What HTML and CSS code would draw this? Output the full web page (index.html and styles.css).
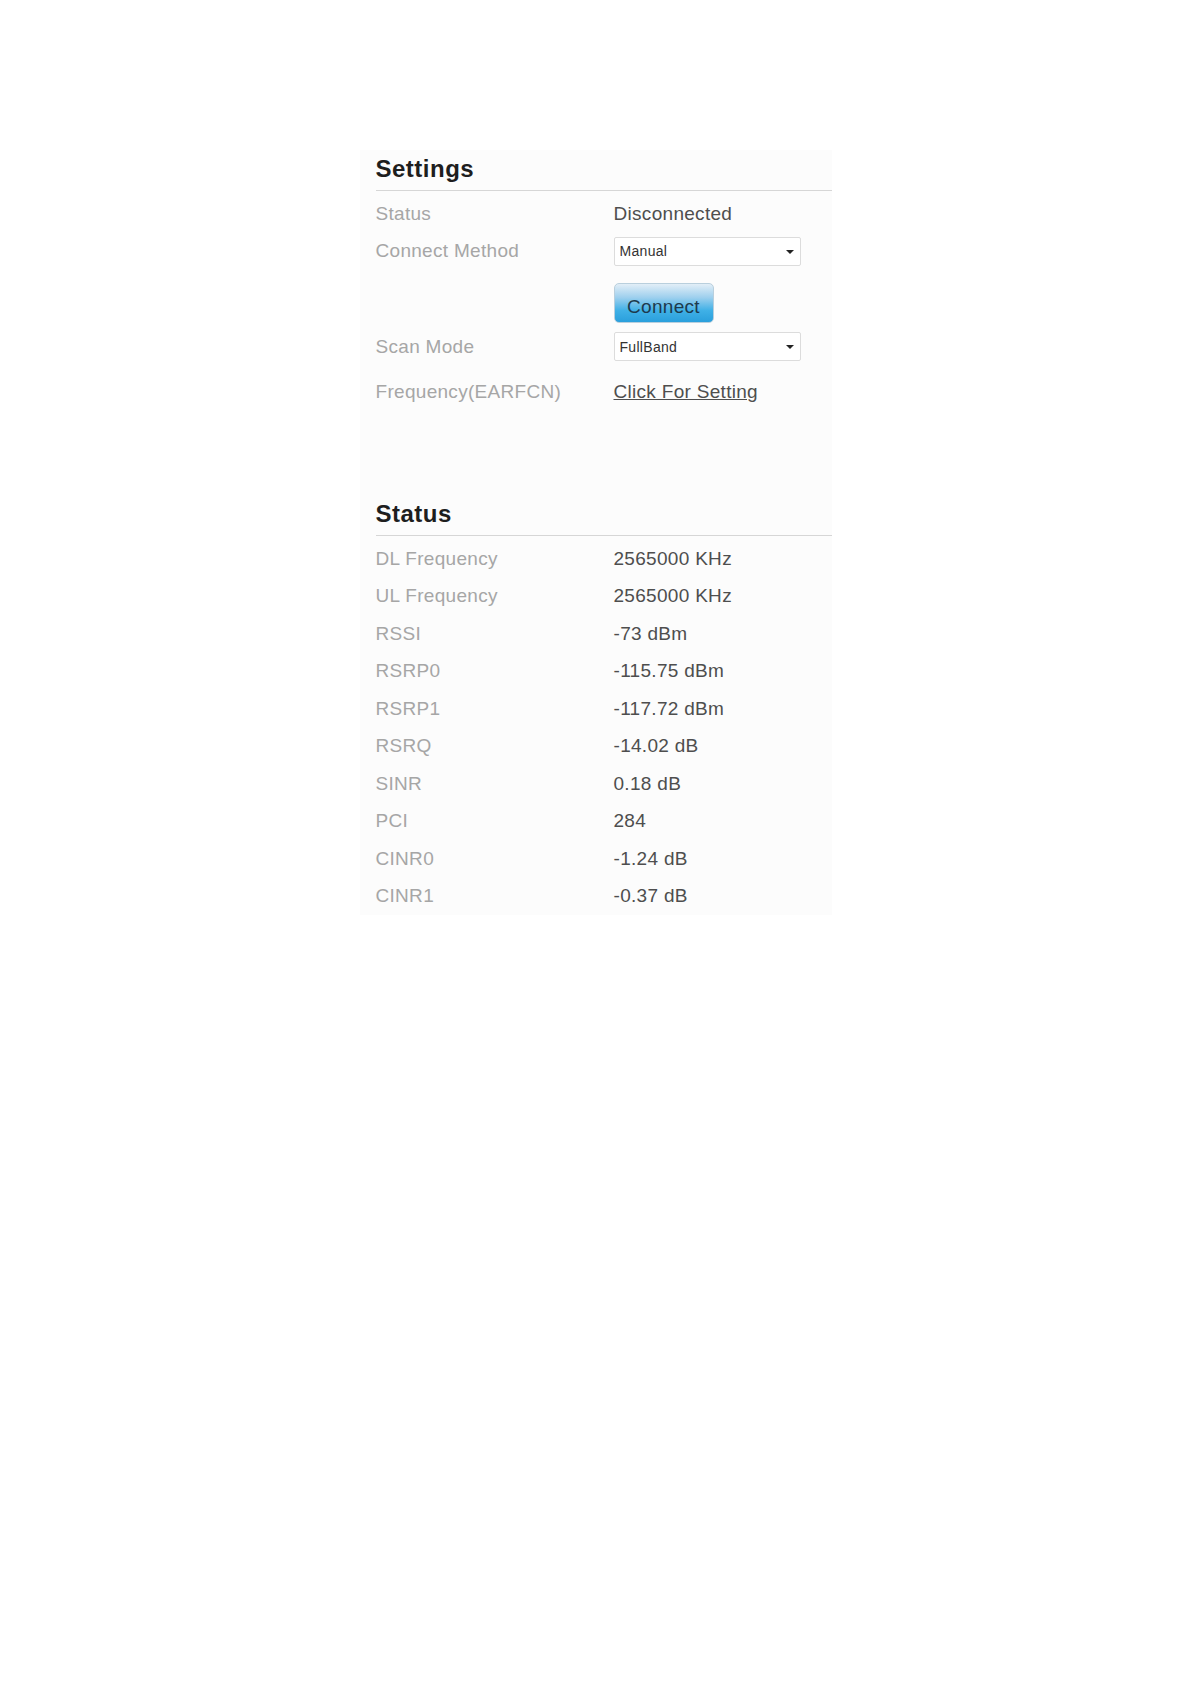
FILE: index.html
```html
<!DOCTYPE html>
<html lang="en">
<head>
  <meta charset="UTF-8">
  <meta name="viewport" content="width=device-width, initial-scale=1.0">
  <title>LTE Settings</title>
  <link rel="stylesheet" href="styles.css">
</head>
<body>

<div class="panel">

  <!-- Settings -->
  <h2 class="section-title">Settings</h2>
  <div class="rows">
    <div class="row">
      <span class="label">Status</span>
      <span class="value">Disconnected</span>
    </div>
    <div class="row">
      <span class="label">Connect Method</span>
      <span class="value">
        <span class="select">Manual<span class="caret"></span></span>
      </span>
    </div>
    <div class="row button-row">
      <span class="label"></span>
      <span class="value"><button type="button" class="connect-btn">Connect</button></span>
    </div>
    <div class="row">
      <span class="label">Scan Mode</span>
      <span class="value">
        <span class="select">FullBand<span class="caret"></span></span>
      </span>
    </div>
    <div class="row link-row">
      <span class="label">Frequency(EARFCN)</span>
      <span class="value"><a href="#" class="setting-link">Click For Setting</a></span>
    </div>
  </div>

  <!-- Status -->
  <h2 class="section-title status-title">Status</h2>
  <div class="rows">
    <div class="row"><span class="label">DL Frequency</span><span class="value">2565000 KHz</span></div>
    <div class="row"><span class="label">UL Frequency</span><span class="value">2565000 KHz</span></div>
    <div class="row"><span class="label">RSSI</span><span class="value">-73 dBm</span></div>
    <div class="row"><span class="label">RSRP0</span><span class="value">-115.75 dBm</span></div>
    <div class="row"><span class="label">RSRP1</span><span class="value">-117.72 dBm</span></div>
    <div class="row"><span class="label">RSRQ</span><span class="value">-14.02 dB</span></div>
    <div class="row"><span class="label">SINR</span><span class="value">0.18 dB</span></div>
    <div class="row"><span class="label">PCI</span><span class="value">284</span></div>
    <div class="row"><span class="label">CINR0</span><span class="value">-1.24 dB</span></div>
    <div class="row"><span class="label">CINR1</span><span class="value">-0.37 dB</span></div>
  </div>

</div>

</body>
</html>
```

FILE: styles.css
```css
body {
  margin: 0;
  background: #ffffff;
  font-family: "Liberation Sans", Arial, sans-serif;
}

.panel {
  width: 456px;
  margin: 150px auto 0;
  padding: 4px 0 0 16px;
  background: #fcfcfc;
}

.section-title {
  margin: 0;
  padding-bottom: 6px;
  font-size: 24px;
  line-height: 30px;
  font-weight: bold;
  letter-spacing: 0.5px;
  color: #1e1e1e;
  border-bottom: 1px solid #d6d6d6;
}

.status-title {
  margin-top: 88px;
}

.rows {
  padding-top: 4px;
}

.row {
  display: flex;
  align-items: center;
  height: 37.5px;
  font-size: 19px;
  letter-spacing: 0.3px;
}

.label {
  width: 238px;
  flex-shrink: 0;
  color: #a6a6a6;
}

.value {
  color: #4e4e4e;
}

.select {
  position: relative;
  display: flex;
  align-items: center;
  box-sizing: border-box;
  width: 187px;
  height: 29px;
  padding-left: 5px;
  background: #ffffff;
  border: 1px solid #dcdcdc;
  border-radius: 2px;
  font-size: 14px;
  color: #333333;
  letter-spacing: 0.3px;
}

.caret {
  position: absolute;
  right: 6px;
  top: 12px;
  border-left: 4px solid transparent;
  border-right: 4px solid transparent;
  border-top: 4px solid #222222;
}

.button-row {
  height: auto;
  padding: 13px 0 5px;
}

.connect-btn {
  box-sizing: border-box;
  width: 100px;
  height: 40px;
  padding: 7px 0 0;
  font-family: "Liberation Sans", Arial, sans-serif;
  font-size: 19px;
  letter-spacing: 0.3px;
  color: #1d3a4d;
  background: linear-gradient(to bottom, #e2eef7 0%, #9fd0ee 35%, #3fb0e6 70%, #2a9fdc 100%);
  border: 1px solid #b9cfdd;
  border-radius: 5px;
  cursor: pointer;
}

.link-row {
  margin-top: 8px;
}

.setting-link {
  color: #4e4e4e;
  text-decoration: underline;
}
```
